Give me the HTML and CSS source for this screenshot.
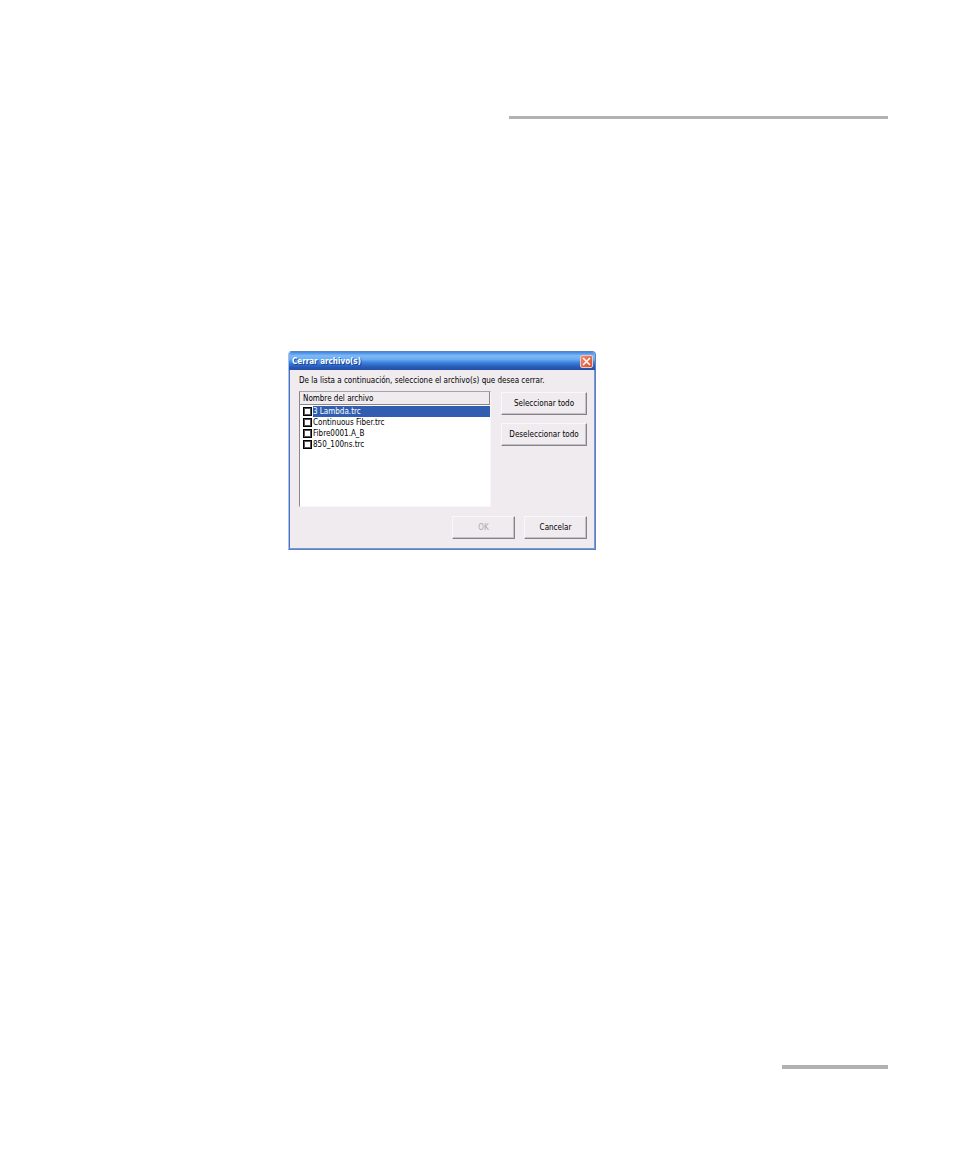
FILE: index.html
```
<!DOCTYPE html>
<html lang="es">
<head>
    <meta charset="UTF-8">
    <meta name="viewport" content="width=device-width, initial-scale=1.0">
    <title>Cerrar archivo(s)</title>
    <link rel="stylesheet" href="styles.css">
</head>
<body>
    <header class="page-header"></header>

    <main class="page-content">
        <form class="dialog" role="dialog" aria-labelledby="dialog-title">
            <div class="title-bar">
                <h1 id="dialog-title" class="title">Cerrar archivo(s)</h1>
                <button type="button" class="close-button" aria-label="Cerrar">
                    <svg width="9" height="9" viewBox="0 0 9 9">
                        <path d="M1 1L8 8M8 1L1 8" stroke="#fff" stroke-width="1.5"/>
                    </svg>
                </button>
            </div>
            <div class="dialog-body">
                <p class="instructions">De la lista a continuación, seleccione el archivo(s) que desea cerrar.</p>
                <div class="selection">
                    <div class="file-list">
                        <table class="file-table">
                            <thead>
                                <tr><th>Nombre del archivo</th></tr>
                            </thead>
                            <tbody>
                                <tr class="selected"><td><label><input type="checkbox"><span>3 Lambda.trc</span></label></td></tr>
                                <tr><td><label><input type="checkbox"><span>Continuous Fiber.trc</span></label></td></tr>
                                <tr><td><label><input type="checkbox"><span>Fibre0001.A_B</span></label></td></tr>
                                <tr><td><label><input type="checkbox"><span>850_100ns.trc</span></label></td></tr>
                            </tbody>
                        </table>
                    </div>
                    <div class="side-buttons">
                        <button type="button" class="button">Seleccionar todo</button>
                        <button type="button" class="button">Deseleccionar todo</button>
                    </div>
                </div>
                <div class="dialog-actions">
                    <button type="submit" class="button" disabled>OK</button>
                    <button type="button" class="button">Cancelar</button>
                </div>
            </div>
        </form>
    </main>

    <footer class="page-footer"></footer>
</body>
</html>
```
FILE: styles.css
```
/* Reset and base styles */
* {
    margin: 0;
    padding: 0;
    box-sizing: border-box;
}
body {
    display: flex;
    flex-direction: column;
    min-height: 100vh;
    padding: 116px 66px 89px;
    background-color: #fff;
    color: #000;
    font-family: "DejaVu Sans Condensed", "DejaVu Sans", sans-serif;
    font-size: 8px;
    line-height: 11px;
}

/* Page rules */
.page-header,
.page-footer {
    align-self: flex-end;
    background-color: #b2b2b2;
}
.page-header {
    width: 379px;
    height: 3px;
}
.page-footer {
    width: 106px;
    height: 4px;
}
.page-content {
    flex: 1;
    padding: 232px 0 0 222px;
}

/* Dialog */
.dialog {
    width: 308px;
    border: 1px solid #5b80c4;
    border-left-color: #a9c0ea;
    border-radius: 4px 4px 0 0;
    background-color: #efebee;
    overflow: hidden;
}
.title-bar {
    display: flex;
    align-items: center;
    justify-content: space-between;
    height: 18px;
    padding: 0 2px 0 3px;
    background: linear-gradient(#3f86e0, #7cb8f6 20%, #6aaef2 40%, #3a80dc 60%, #2858b4 85%, #2450a8);
}
.title {
    color: #fff;
    font-size: 8px;
    font-weight: bold;
    line-height: 11px;
    text-shadow: 1px 1px #16429c;
}
.close-button {
    display: flex;
    align-items: center;
    justify-content: center;
    width: 13px;
    height: 13px;
    border: 1px solid #f0c8c0;
    border-radius: 2px;
    background: linear-gradient(135deg, #f08c70, #d8502c);
}
.dialog-body {
    padding: 5px 7px 9px 9px;
    border: solid #7b98d0;
    border-width: 0 1px 1px 0;
    border-left: 1px solid #4a74c0;
}
.instructions {
    margin-bottom: 5px;
}
.selection {
    display: flex;
    justify-content: space-between;
}

/* File list */
.file-list {
    width: 192px;
    height: 116px;
    border: 1px solid #f8f6f8;
    border-top-color: #a5a3a8;
    border-left-color: #88868c;
    background-color: #fff;
}
.file-table {
    width: 100%;
    border-collapse: separate;
    border-spacing: 0;
}
.file-table th {
    height: 13px;
    padding-left: 3px;
    border-right: 1px solid #88868c;
    border-bottom: 1px solid #88868c;
    background-color: #efebee;
    font-weight: normal;
    text-align: left;
}
.file-table tbody::before {
    content: "";
    display: block;
    height: 1px;
}
.file-table label {
    display: flex;
    align-items: center;
    height: 11px;
    padding-left: 3px;
}
.file-table input {
    appearance: none;
    width: 9px;
    height: 9px;
    margin-right: 1px;
    border: 1px solid #000;
    box-shadow: inset 0 0 0 1px #555;
    background-color: #fff;
}
.file-table input:checked {
    background-color: #315eb0;
}
.file-table span {
    flex: 1;
}
.selected span {
    background-color: #315eb0;
    color: #fff;
}

/* Buttons */
.side-buttons {
    display: flex;
    flex-direction: column;
    gap: 8px;
    width: 86px;
    padding-top: 1px;
}
.dialog-actions {
    display: flex;
    justify-content: flex-end;
    gap: 9px;
    margin-top: 9px;
}
.button {
    height: 23px;
    border: 1px solid #f9f7f9;
    border-right-color: #858389;
    border-bottom-color: #858389;
    box-shadow: inset -1px -1px #c4c1c6;
    background-color: #efebee;
    color: #000;
    font: inherit;
}
.button:disabled {
    color: #aaa7ac;
}
.dialog-actions .button {
    width: 63px;
}
```
